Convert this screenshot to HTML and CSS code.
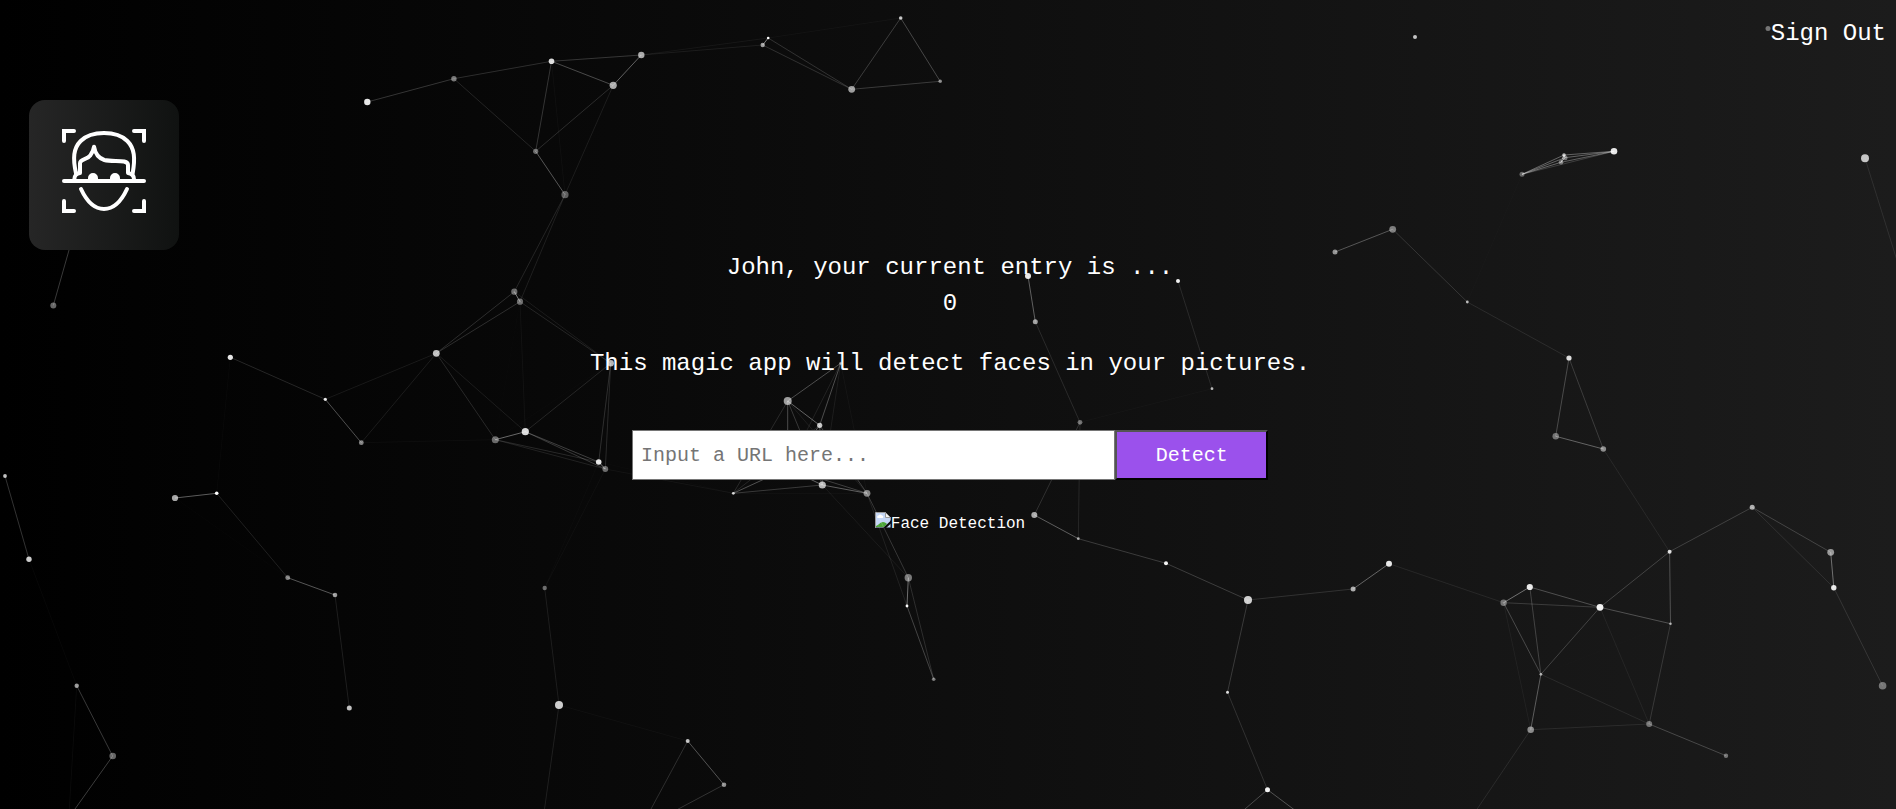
FILE: index.html
```html
<!DOCTYPE html>
<html lang="en">
<head>
  <meta charset="utf-8">
  <meta name="viewport" content="width=device-width, initial-scale=1">
  <title>Face Detection</title>
  <link rel="stylesheet" href="styles.css">
</head>
<body>
  <canvas class="particles" id="particles" aria-hidden="true"></canvas>

  <nav class="nav">
    <a class="nav-link" href="#signout">Sign Out</a>
  </nav>

  <div class="logo">
    <svg class="logo-icon" viewBox="87 60 450 450" role="img" aria-label="Face scan">
      <g fill="none" stroke="#fff" stroke-width="12" stroke-linecap="round">
        <path d="M192 183V153H222M402 153H432V183M192 363V393H222M402 393H432V363"/>
        <path d="M192 303H432"/>
        <path stroke-linejoin="round" d="M228 280C218 235 220 205 242 183C260 165 283 159 312 159C341 159 364 165 382 183C404 205 406 235 398 280"/>
        <path stroke-linejoin="round" d="M223 298C223 288 229 280 240 279V250C240 236 262 240 271 226C279 215 281 208 282 200C286 224 297 235 313 240C340 247 384 236 384 255V279C396 281 402 288 402 298"/>
        <path d="M243 327C263 370 285 387 312 387C339 387 361 370 381 327"/>
      </g>
      <path fill="#fff" d="M186 147H200V159H186ZM424 147H438V159H424ZM186 387H200V399H186ZM424 387H438V399H424Z"/>
      <path fill="#fff" d="M264 300V294A15 15 0 0 1 294 294V300ZM330 300V294A15 15 0 0 1 360 294V300Z"/>
    </svg>
  </div>

  <main class="main">
    <div class="rank">
      <p>John, your current entry is ...</p>
      <p>0</p>
    </div>
    <p class="intro">This magic app will detect faces in your pictures.</p>
    <form class="form">
      <input class="form-input" type="text" placeholder="Input a URL here..." aria-label="Image URL">
      <button class="form-button" type="button">Detect</button>
    </form>
    <div class="result">
      <svg class="result-icon" viewBox="0 0 16 16" aria-hidden="true">
        <path fill="#c4d6f6" d="M.5.5H10.500L15.500 5.500V15.500H.5Z"/>
        <path fill="#fff" d="M2.500 6a1.500 1.500 0 0 1 1-2.500a2 2 0 0 1 3.500 0a1.300 1.300 0 0 1 .5 2.500Z"/>
        <path fill="#4ba537" d="M1 15V14C4 13 5 10 8 10C10 10 11 11 12 12L9 15Z"/>
        <path fill="none" stroke="#9a9a9a" d="M.5 16V.5H10.500L15.500 5.500V8"/>
        <path fill="#f4f4f4" stroke="#9a9a9a" d="M10.500.5V5.500H15.500Z"/>
        <path fill="#0c0c0c" d="M16 8.500L8 16H11L16 11.500Z"/>
      </svg><span>Face Detection</span>
    </div>
  </main>
  <script src="particles.js"></script>
</body>
</html>
```
FILE: styles.css
```css
* {
  box-sizing: border-box;
}

body {
  margin: 0;
  min-height: 100vh;
  background: linear-gradient(90deg, #000 0%, #1c1c1c 100%);
  color: #fff;
  font-family: "Courier New", Courier, "Liberation Mono", monospace;
  font-size: 16px;
  line-height: 24px;
}

p {
  margin: 0;
}

.particles {
  position: fixed;
  inset: 0;
  z-index: 1;
  width: 100%;
  height: 100%;
  pointer-events: none;
}

.nav {
  display: flex;
  justify-content: flex-end;
  padding: 16px 10px;
}

.nav-link {
  color: #fff;
  font-size: 24px;
  line-height: 36px;
  text-decoration: none;
}

.logo {
  position: relative;
  z-index: 2;
  width: 150px;
  height: 150px;
  margin: 32px 0 0 29px;
  border-radius: 16px;
  background: linear-gradient(90deg, #262626, #101211);
}

.logo-icon {
  display: block;
  width: 100%;
}

.main {
  display: flex;
  flex-direction: column;
  align-items: center;
  padding-left: 4px;
}

.rank,
.intro {
  font-size: 24px;
  line-height: 36px;
  text-align: center;
}

.intro {
  margin-top: 24px;
}

.form {
  position: relative;
  z-index: 2;
  display: flex;
  width: 100%;
  max-width: 636px;
  height: 50px;
  margin-top: 48px;
}

.form-input,
.form-button {
  border-radius: 0;
  font-family: inherit;
  font-size: 20px;
}

.form-input {
  flex: 1;
  min-width: 0;
  padding: 8px;
  border: 1px solid #767676;
  background: #fff;
}

.form-input::placeholder {
  color: #757575;
}

.form-button {
  width: 24%;
  padding: 0;
  border: 2px outset #000;
  background: #9b51ec;
  color: #fff;
}

.result {
  display: flex;
  align-items: flex-start;
  margin-top: 32px;
}

.result-icon {
  width: 16px;
  height: 16px;
}
```
FILE: particles.js
```js
// Each particle: x, y, radius, opacity
const FIELD_WIDTH = 1896;
const LINK_DISTANCE = 143;
const LINK_OPACITY = 0.5;
const PARTICLES = [
  [53.3, 305.5, 3, .4], [75, 229, 2, .4], [1768, 28.5, 2.5, .4], [1865, 158.3, 4, .75], [1900, 270, 2, .5],
  [1415, 37, 2, .75],
  [367.3, 102, 3.2, .9], [453.9, 78.7, 2.7, .45], [551.5, 61.3, 2.8, .85], [641.3, 55, 3.2, .65],
  [613.2, 85.3, 3.6, .65], [535.7, 151.3, 2.6, .4], [565, 194.7, 3.6, .35],
  [762.7, 45, 2.2, .6], [768.2, 38, 1.3, 1], [851.7, 89.3, 3.4, .6], [900.7, 18, 1.8, .75], [940.2, 81.3, 1.8, .5],
  [514.3, 291.7, 3.1, .4], [520, 301.7, 3.1, .4], [436.3, 353.3, 3.4, .75], [230.3, 357.3, 2.6, .9],
  [325.3, 399.3, 1.6, .9], [361.3, 442.7, 2.4, .5], [495.3, 439.7, 3.5, .4], [525.3, 431.7, 3.6, .85],
  [610.7, 363.3, 3.2, .7], [598.7, 462, 2.8, .9], [605.3, 469, 2.9, .4],
  [787.7, 401, 4, .6], [819.7, 425.3, 2.6, .75], [840.7, 363.3, 1.5, .5], [733.3, 493.3, 1.4, .8],
  [822.3, 485, 3.6, .7], [867, 493.3, 3.4, .5], [787.7, 468.3, 2, .5],
  [1028, 276, 3, .9], [1035.3, 321.7, 2.5, .6], [1178, 281, 2, .95], [1212, 388.7, 1.4, .7],
  [1080, 422.3, 2.4, .4], [1034.3, 515, 3, .65], [1078.3, 538.7, 1.4, .6], [1166, 563.3, 2, .95],
  [1335, 252, 2.5, .55], [1392.7, 229.3, 3.4, .45], [1467.3, 302, 1.4, .7], [1522, 174.3, 2.5, .35],
  [1564, 155, 1.8, .7], [1565, 157.7, 2.5, .4], [1561, 162.3, 2.3, .4], [1614, 151.3, 3.3, .9],
  [1569, 358, 2.6, .85], [1555.7, 436.3, 3.2, .4], [1603.3, 449, 2.8, .5],
  [1248, 600, 4, .8], [1353.1, 589, 2.5, .65], [1389, 563.7, 3, .9], [1503.6, 602.7, 3.2, .4],
  [1529.8, 587, 3.1, .9], [1600, 607.3, 3.4, .95], [1669.6, 551.7, 2, .85], [1670.5, 623.7, 1.3, .6],
  [1752.2, 507.3, 2.5, .65], [1830.7, 552.3, 3.4, .55], [1833.8, 587.7, 2.7, .9], [1882.6, 685.7, 3.8, .4],
  [1540.9, 674.3, 1.4, .6], [1530.7, 729.7, 3.3, .5], [1649.2, 724, 3, .4], [1726, 755.7, 2.2, .4],
  [1227.5, 692.3, 1.5, .85], [1267.5, 789.7, 2.5, .95], [1465, 827, 2, .5], [1210, 839, 2, .5], [1320, 829, 2, .5],
  [5, 476, 1.9, .75], [29, 559.3, 2.7, .8], [175, 498, 3.1, .65], [216.7, 493.3, 1.8, 1],
  [287.7, 577.7, 2.4, .5], [335, 595, 2.3, .6], [349.3, 708, 2.5, .75], [76.7, 685.7, 2.2, .6],
  [112.7, 756, 3.3, .4], [68.8, 817.7, 2, .4],
  [544.7, 588, 2.2, .4], [559, 705, 4, .8], [687.7, 741, 2, .75], [724, 784.7, 2.3, .55],
  [543, 820, 2, .5], [640, 829.4, 2, .5],
  [908.3, 577.7, 3.7, .45], [907, 606, 1.4, 1], [933.7, 679.3, 1.8, .45]
];

function draw() {
  const canvas = document.getElementById("particles");
  const ctx = canvas.getContext("2d");
  canvas.width = window.innerWidth;
  canvas.height = window.innerHeight;
  const scale = canvas.width / FIELD_WIDTH;
  ctx.scale(scale, scale);

  PARTICLES.forEach(([x, y, radius, opacity], i) => {
    ctx.fillStyle = `rgba(255, 255, 255, ${opacity})`;
    ctx.beginPath();
    ctx.arc(x, y, radius, 0, Math.PI * 2);
    ctx.fill();

    PARTICLES.slice(i + 1).forEach(([x2, y2]) => {
      const distance = Math.hypot(x2 - x, y2 - y);
      if (distance >= LINK_DISTANCE) return;
      const alpha = LINK_OPACITY * (1 - distance / LINK_DISTANCE);
      ctx.strokeStyle = `rgba(255, 255, 255, ${alpha})`;
      ctx.lineWidth = 1;
      ctx.beginPath();
      ctx.moveTo(x, y);
      ctx.lineTo(x2, y2);
      ctx.stroke();
    });
  });
}

window.addEventListener("resize", draw);
draw();
```
